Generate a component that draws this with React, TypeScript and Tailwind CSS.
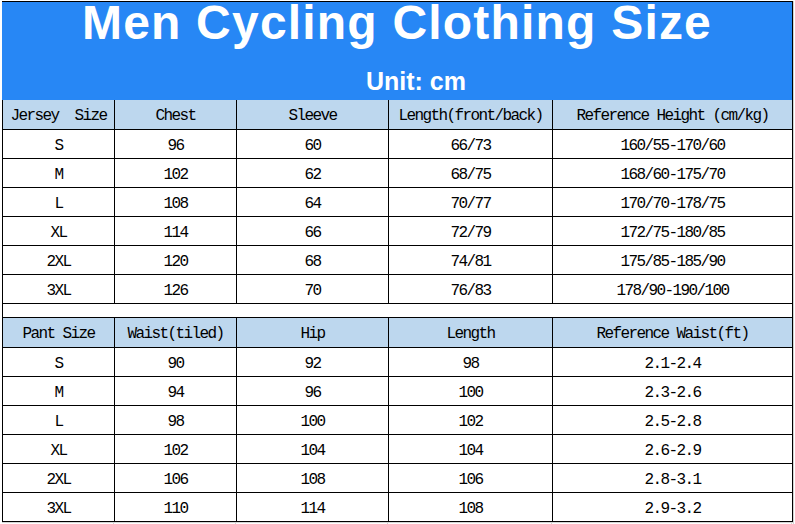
import React from 'react';

const jerseyHead = ['Jersey  Size', 'Chest', 'Sleeve', 'Length(front/back)', 'Reference Height (cm/kg)'];
const jerseyRows = [
  ['S', '96', '60', '66/73', '160/55-170/60'],
  ['M', '102', '62', '68/75', '168/60-175/70'],
  ['L', '108', '64', '70/77', '170/70-178/75'],
  ['XL', '114', '66', '72/79', '172/75-180/85'],
  ['2XL', '120', '68', '74/81', '175/85-185/90'],
  ['3XL', '126', '70', '76/83', '178/90-190/100'],
];

const pantHead = ['Pant Size', 'Waist(tiled)', 'Hip', 'Length', 'Reference Waist(ft)'];
const pantRows = [
  ['S', '90', '92', '98', '2.1-2.4'],
  ['M', '94', '96', '100', '2.3-2.6'],
  ['L', '98', '100', '102', '2.5-2.8'],
  ['XL', '102', '104', '104', '2.6-2.9'],
  ['2XL', '106', '108', '106', '2.8-3.1'],
  ['3XL', '110', '114', '108', '2.9-3.2'],
];

const cols = 'grid grid-cols-[112px_122px_152px_164px_240px]';

const Row = ({ cells, head }: { cells: string[]; head?: boolean }) => (
  <div className={`${cols} ${head ? 'h-[30px] bg-[#bdd7ee]' : 'h-[29px] bg-white'}`}>
    {cells.map((c, i) => (
      <div
        key={i}
        className="flex items-center justify-center pt-[3px] border-r border-b border-black whitespace-pre"
      >
        {c}
      </div>
    ))}
  </div>
);

const App: React.FC = () => {
  return (
    <div className="w-[795px] h-[524px] bg-white">
      <div className="flex">
        <div className="ml-[2px] mt-[1px] w-[791px]">
          {/* Title block */}
          <div className="h-[99px] border-t border-r border-black bg-[#2787f5] text-white font-bold font-['Liberation_Sans']">
            <div className="text-center text-[48px] leading-[42px] tracking-[1.2px]">
              Men Cycling Clothing Size
            </div>
            <div className="mt-[25px] pl-[38px] text-center text-[25px] leading-[25px]">
              Unit: cm
            </div>
          </div>

          <div className="border-l border-black text-[16px] tracking-[-1.6px] text-black font-mono">
            <Row cells={jerseyHead} head />
            {jerseyRows.map((r) => (
              <Row key={'j' + r[0]} cells={r} />
            ))}
            <div className="h-[14px] border-r border-b border-black" />
            <Row cells={pantHead} head />
            {pantRows.map((r) => (
              <Row key={'p' + r[0]} cells={r} />
            ))}
          </div>
          <div className={`${cols} h-[3px] border-t border-[#d4d4d4]`}>
            {pantHead.map((_, i) => (
              <div key={i} className="border-r border-[#d4d4d4]" />
            ))}
          </div>
        </div>
        <div className="w-[2px] mt-[1px] h-[523px] border-l border-[#d4d4d4]" />
      </div>
    </div>
  );
};

export default App;
